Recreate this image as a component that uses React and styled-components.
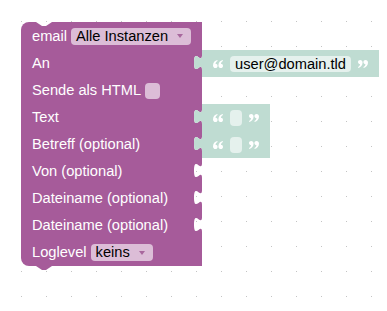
import styled, { createGlobalStyle, css } from 'styled-components';

const GlobalStyle = createGlobalStyle`
  html, body {
    margin: 0;
    padding: 0;
    background: #fff;
  }
  body {
    font-family: "Liberation Sans", Arial, sans-serif;
  }
`;

const BLOCK = '#a65b9a';
const BLOCK_FIELD = '#dcbdd7';
const SHADOW = '#bfdcd2';
const SHADOW_FIELD = '#e5f1ed';

const dots = css`
  background-color: #fff;
  background-image: conic-gradient(from 270deg at 1px 1px, #c4c4c4 90deg, transparent 0deg);
  background-size: 25px 25px;
  background-position: 21px 21px;
`;

const tabPath = "path('M8,0 C8,10 0,-8 0,7.5 C0,23 8,5 8,15 Z')";

const Workspace = styled.div`
  ${dots}
  min-height: 100vh;
  box-sizing: border-box;
  padding: 22px 0 0 21px;
`;

const Block = styled.div`
  position: relative;
  display: flex;
  flex-direction: column;
  align-items: flex-start;
  width: max-content;
  font-size: 14.67px;
  color: #fff;

  /* previous-statement notch */
  &::before {
    content: '';
    position: absolute;
    top: 0;
    left: 15px;
    width: 16px;
    height: 4px;
    ${dots}
    background-attachment: fixed;
    clip-path: polygon(0 0, 6px 4px, 10px 4px, 16px 0);
    z-index: 2;
  }

  /* next-statement tab */
  &::after {
    content: '';
    position: absolute;
    bottom: -4px;
    left: 15px;
    width: 16px;
    height: 4px;
    background: ${BLOCK};
    clip-path: polygon(0 0, 16px 0, 10px 4px, 6px 4px);
  }
`;

const Row = styled.div`
  display: flex;
  align-items: stretch;
`;

const Cell = styled.div`
  position: relative;
  box-sizing: border-box;
  width: 181px;
  height: ${p => (p.$first ? 28 : 27)}px;
  padding-left: 11px;
  display: flex;
  align-items: center;
  gap: 4px;
  background: ${BLOCK};
  border-top-left-radius: ${p => (p.$first ? 8 : 0)}px;
  border-bottom-left-radius: ${p => (p.$last ? 8 : 0)}px;
  white-space: nowrap;
`;

const Socket = styled.span`
  position: absolute;
  right: 0;
  top: 5px;
  width: 8px;
  height: 15px;
  ${dots}
  background-attachment: fixed;
  clip-path: ${tabPath};
`;

const Label = styled.span`
  line-height: 17px;
`;

const Dropdown = styled.span`
  display: inline-flex;
  align-items: center;
  gap: 9px;
  height: 17px;
  padding: 0 8px 0 5px;
  border-radius: 4px;
  background: ${BLOCK_FIELD};
  color: #000;
  line-height: 17px;

  svg {
    display: block;
  }
`;

const Checkbox = styled.span`
  width: 15px;
  height: 16px;
  border-radius: 4px;
  background: ${BLOCK_FIELD};
`;

const TextBlock = styled.div`
  position: relative;
  height: 27px;
  padding: 0 11px 0 11px;
  display: flex;
  align-items: center;
  gap: 7px;
  background: ${SHADOW};

  &::before {
    content: '';
    position: absolute;
    left: -8px;
    top: 5px;
    width: 8px;
    height: 15px;
    background: ${SHADOW};
    clip-path: ${tabPath};
  }

  svg {
    display: block;
  }
`;

const TextField = styled.span`
  box-sizing: border-box;
  min-width: 12px;
  height: 16px;
  padding: 0 ${p => (p.$empty ? 0 : 5)}px;
  border-radius: 4px;
  background: ${SHADOW_FIELD};
  color: #000;
  line-height: 16px;
  font-size: 14.67px;
`;

const comma = 'M4.3,0 C1.8,0.6 0,2.6 0,5.4 C0,6.9 1,8 2.4,8 C3.7,8 4.6,7.1 4.6,5.9 C4.6,4.7 3.7,3.8 2.5,3.8 C2.6,2.7 3.3,1.7 4.6,1.1 Z';

const Quote = ({ close }) => (
  <svg width="10" height="8" viewBox="0 0 10 8">
    <g fill="#fff" transform={close ? 'rotate(180 5 4)' : undefined}>
      <path d={comma} />
      <path d={comma} transform="translate(5.4 0)" />
    </g>
  </svg>
);

const Arrow = () => (
  <svg width="6" height="4" viewBox="0 0 6 4">
    <path d="M0 0 H6 L3 4 Z" fill="#a8679d" />
  </svg>
);

const Text = ({ value }) => (
  <TextBlock>
    <Quote />
    <TextField $empty={!value}>{value}</TextField>
    <Quote close />
  </TextBlock>
);

const inputs = [
  { label: 'An', value: 'user@domain.tld' },
  { label: 'Sende als HTML', checkbox: true },
  { label: 'Text', value: '' },
  { label: 'Betreff (optional)', value: '' },
  { label: 'Von (optional)', socket: true },
  { label: 'Dateiname (optional)', socket: true },
  { label: 'Dateiname (optional)', socket: true },
];

const App = () => (
  <>
    <GlobalStyle />
    <Workspace>
      <Block>
        <Row>
          <Cell $first>
            <Label>email</Label>
            <Dropdown>Alle Instanzen <Arrow /></Dropdown>
          </Cell>
        </Row>
        {inputs.map((input, i) => (
          <Row key={i}>
            <Cell>
              <Label>{input.label}</Label>
              {input.checkbox && <Checkbox />}
              {!input.checkbox && <Socket />}
            </Cell>
            {input.value !== undefined && <Text value={input.value} />}
          </Row>
        ))}
        <Row>
          <Cell $last>
            <Label>Loglevel</Label>
            <Dropdown>keins <Arrow /></Dropdown>
          </Cell>
        </Row>
      </Block>
    </Workspace>
  </>
);

export default App;
